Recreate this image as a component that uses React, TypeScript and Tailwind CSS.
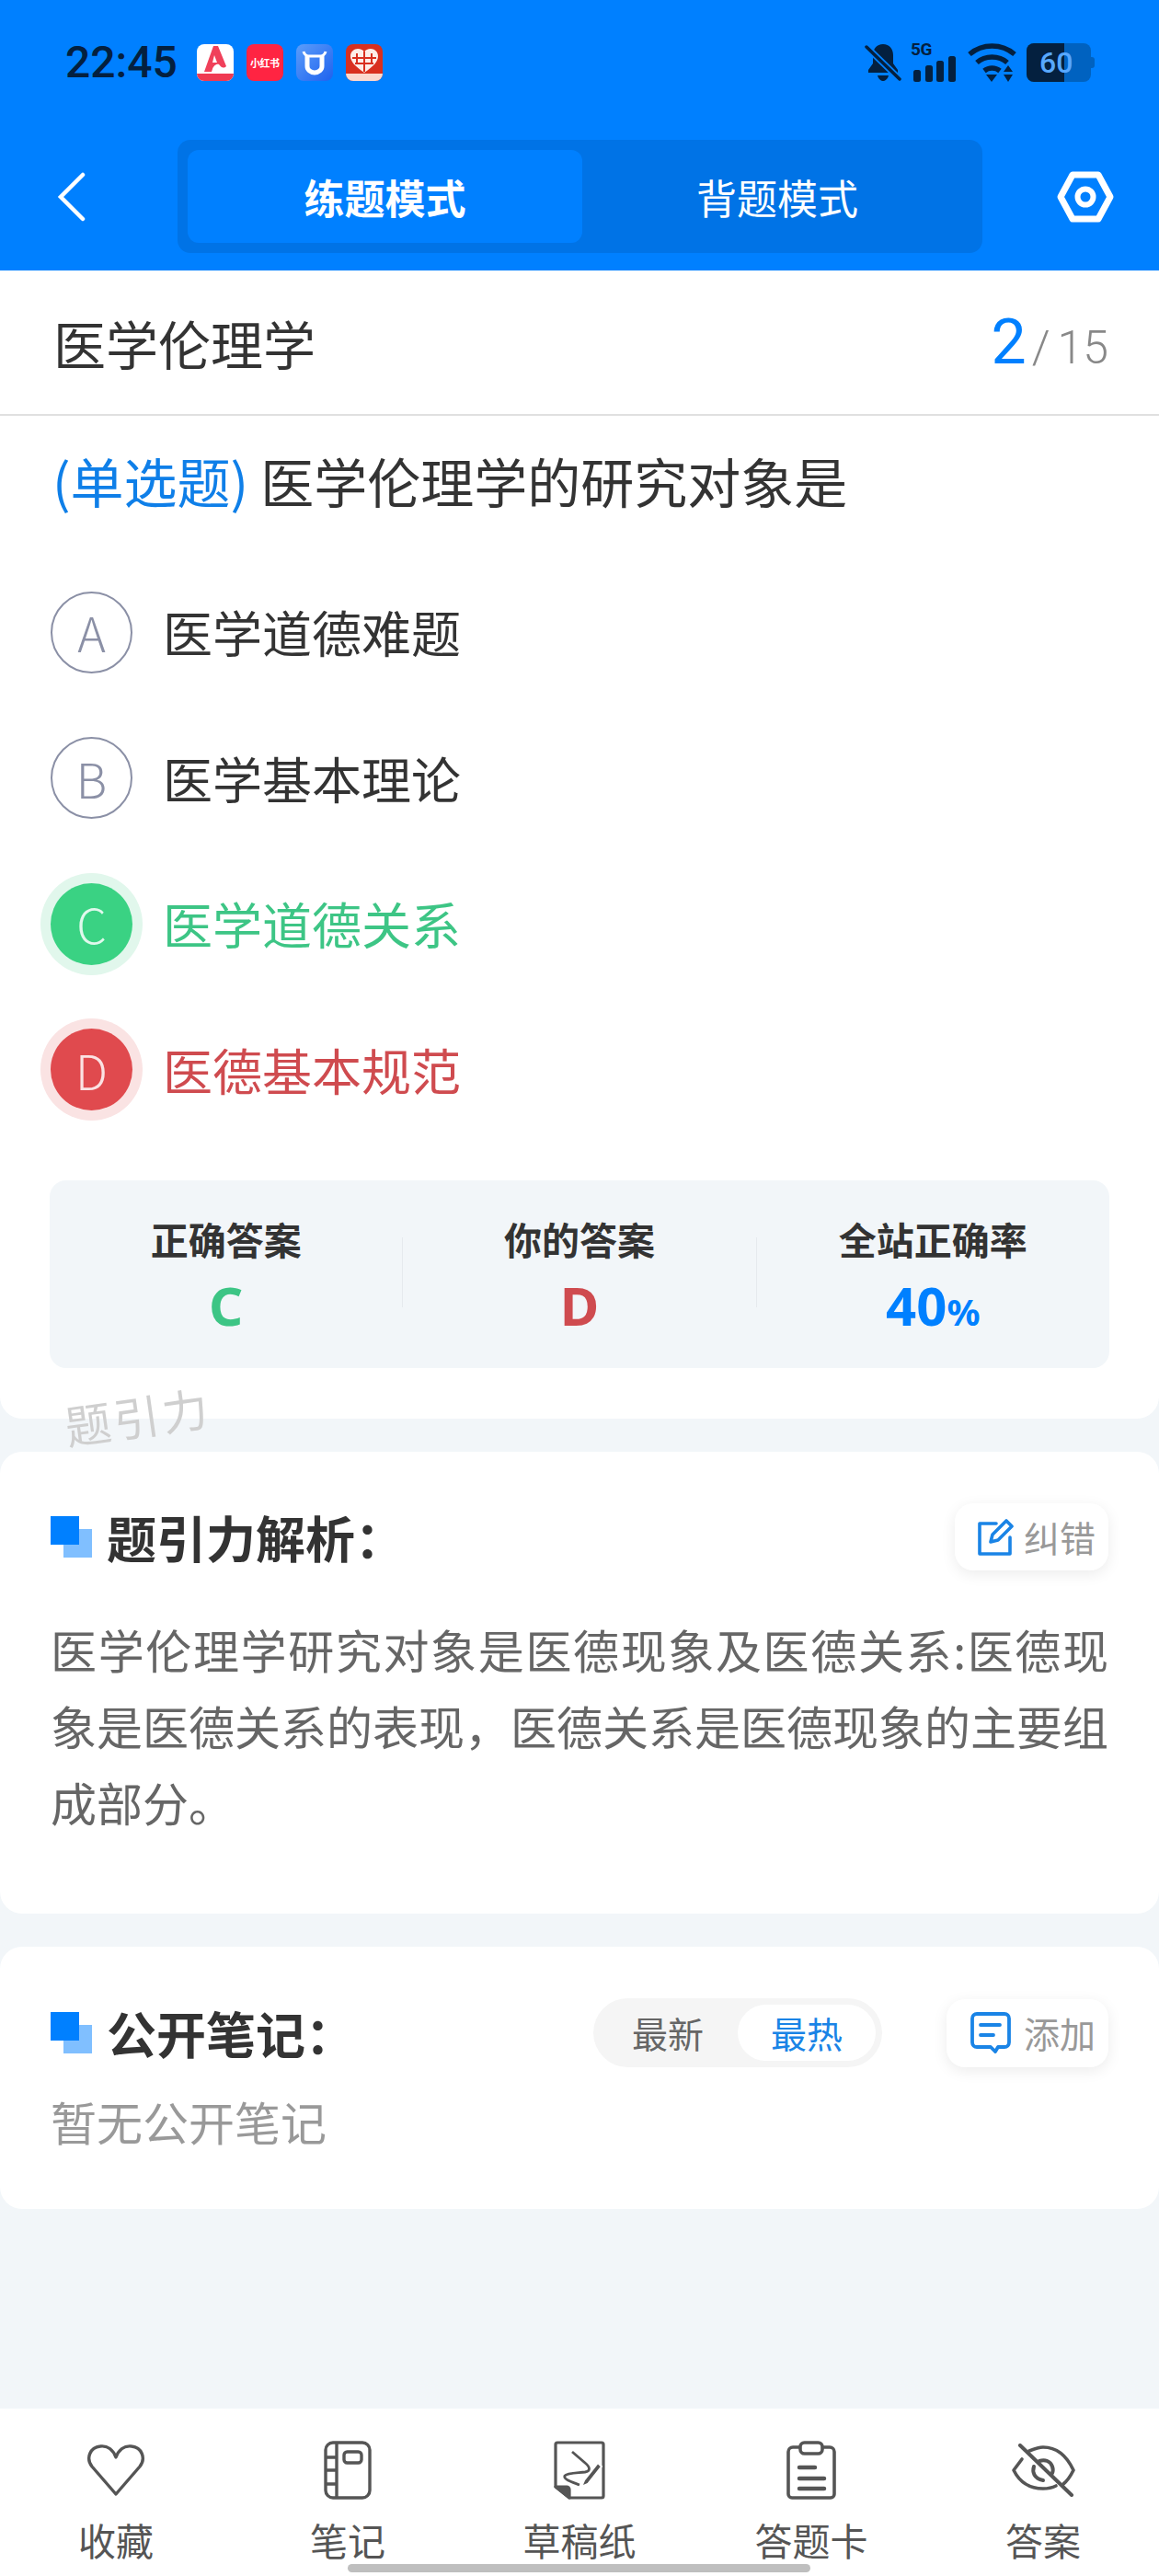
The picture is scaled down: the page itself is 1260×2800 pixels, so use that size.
import React from "react";

const Cjk = "font-['Noto_Sans_CJK_SC','Noto_Sans',sans-serif]";

function Squares() {
  return (
    <div className="relative w-[45px] h-[45px] shrink-0">
      <div className="absolute left-[14px] top-[14px] w-[31px] h-[31px] bg-[#80bfff]" />
      <div className="absolute left-0 top-0 w-[31px] h-[31px] bg-[#0080ff]" />
    </div>
  );
}

function AppIcons() {
  return (
    <div className="flex gap-[14px] ml-[21px]">
      <svg width="40" height="40" viewBox="0 0 40 40">
        <rect width="40" height="40" rx="8" fill="#fff" />
        <path d="M0 32h40v0a8 8 0 0 1-8 8H8a8 8 0 0 1-8-8z" fill="#f03a52" />
        <path d="M18 2h5l9 22c-3 3-6 1-8-2-3-1-6 2-7 5l-1 3H8z" fill="#f0405a" />
        <path d="M19 12l3 8h-5z" fill="#fff" />
      </svg>
      <div className="w-[40px] h-[40px] rounded-[8px] bg-[#ff2442] flex items-center justify-center text-white text-[11px] font-bold leading-none tracking-[-0.5px]">小红书</div>
      <svg width="40" height="40" viewBox="0 0 40 40">
        <defs>
          <linearGradient id="g1" x1="0" y1="0" x2="1" y2="1">
            <stop offset="0" stopColor="#5b9dfa" />
            <stop offset="1" stopColor="#1f62ee" />
          </linearGradient>
        </defs>
        <rect width="40" height="40" rx="8" fill="url(#g1)" />
        <path d="M12 12v12a8 7 0 0 0 16 0V12" fill="none" stroke="#fff" strokeWidth="5" />
        <path d="M8 8c1 4 3 5 7 5h10c4 0 6-1 7-5" fill="none" stroke="#fff" strokeWidth="3" />
      </svg>
      <svg width="40" height="40" viewBox="0 0 40 40">
        <rect width="40" height="40" rx="8" fill="#d9301f" />
        <path d="M0 32h40a8 8 0 0 1-8 8H8a8 8 0 0 1-8-8z" fill="#fbd9cf" />
        <path d="M20 31C10 24 5 19 5 13c0-5 4-8 8-8 3 0 6 1 7 4 1-3 4-4 7-4 4 0 8 3 8 8 0 6-5 11-15 18z" fill="#fdeee8" />
        <path d="M20 8v22M12 10v12M28 10v12M7 15h26M10 21h20" stroke="#d9301f" strokeWidth="2" />
      </svg>
    </div>
  );
}

function StatusRight() {
  const c = "#04203f";
  return (
    <div className="flex items-center mr-[70px] h-[42px]">
      <svg width="40" height="42" viewBox="0 0 40 42" className="mr-[10px]">
        <path d="M20 1c-7 0-11 5-11 12v9l-5 7v3h32v-3l-5-7v-9c0-7-4-12-11-12z" fill={c} />
        <path d="M14 35c1 4 4 6 6 6s5-2 6-6z" fill={c} />
        <path d="M2 4l36 35" stroke="#0080ff" strokeWidth="7" />
        <path d="M2 4l36 35" stroke={c} strokeWidth="3.5" strokeLinecap="round" />
      </svg>
      <div className="relative w-[50px] h-[42px] mr-[12px]">
        <span className="absolute left-0 top-[-3px] text-[19px] leading-[20px] font-bold text-[#04203f] font-['Roboto',sans-serif] tracking-[-0.5px]">5G</span>
        <svg width="50" height="42" viewBox="0 0 50 42" className="absolute left-0 top-0">
          <rect x="3" y="29" width="8" height="13" rx="2.5" fill={c} />
          <rect x="16" y="24" width="8" height="18" rx="2.5" fill={c} />
          <rect x="28" y="19" width="8" height="23" rx="2.5" fill={c} />
          <rect x="41" y="14" width="8" height="28" rx="2.5" fill={c} />
        </svg>
      </div>
      <svg width="53" height="42" viewBox="0 0 53 42" className="mr-[11px]">
        <path d="M2 12c14-12 35-12 49 0" fill="none" stroke={c} strokeWidth="5.5" />
        <path d="M10 21c9-8 24-8 33 0" fill="none" stroke={c} strokeWidth="5.5" />
        <path d="M18 30c5-4 12-4 17 0" fill="none" stroke={c} strokeWidth="5.5" />
        <path d="M20 34h12l-6 8z" fill={c} />
        <path d="M44 24l5 7H39zM44 42l5-8H39z" fill={c} />
      </svg>
      <div className="relative w-[74px] h-[42px]">
        <div className="absolute left-0 top-0 w-[70px] h-[42px] rounded-[8px] bg-[#0062c0]" />
        <div className="absolute right-0 top-[15px] w-[4px] h-[12px] rounded-r-[3px] bg-[#0062c0]" />
        <div className="absolute left-0 top-0 w-[41px] h-[42px] rounded-l-[8px] bg-[#04203f]" />
        <div className="absolute left-[14px] top-0 h-[42px] leading-[42px] text-[32px] font-medium text-[#58a8ff] font-['Roboto',sans-serif]">60</div>
      </div>
    </div>
  );
}

function Heart() {
  return (
    <svg width="64" height="56" viewBox="0 0 64 56" fill="none" stroke="#555" strokeWidth="3.4" strokeLinejoin="round">
      <path d="M32 54L6 24C-1 15 4 3 15 2c8-1 14 4 17 12C35 6 41 1 49 2c11 1 16 13 9 22z" />
    </svg>
  );
}
function Notebook() {
  return (
    <svg width="52" height="64" viewBox="0 0 52 64" fill="none" stroke="#555" strokeWidth="3.4">
      <rect x="2" y="2" width="48" height="60" rx="8" />
      <path d="M14 2v60M2 18h12M2 32h12M2 47h12" />
      <rect x="22" y="12" width="19" height="12" rx="3.5" />
    </svg>
  );
}
function Draft() {
  return (
    <svg width="56" height="64" viewBox="0 0 56 64" fill="none" stroke="#555" strokeWidth="3.2" strokeLinejoin="round">
      <path d="M4 2h48a2 2 0 0 1 2 2v56a2 2 0 0 1-2 2H17L2 50V4a2 2 0 0 1 2-2z" />
      <path d="M2 50h12a3 3 0 0 1 3 3v9z" fill="#555" />
      <path d="M20 12l14 12c6 5 6 9 0 10-9 1-20 1-22 4-2 4 8 7 16 10" strokeWidth="2.8" />
      <path d="M48 24L33 43l-3 7 7-3 15-19z" fill="#555" stroke="#fff" strokeWidth="2" />
    </svg>
  );
}
function Clipboard() {
  return (
    <svg width="56" height="64" viewBox="0 0 56 64" fill="none" stroke="#555" strokeWidth="3.6" strokeLinecap="round">
      <path d="M15 7H8a5 5 0 0 0-5 5v46a4 4 0 0 0 4 4h42a4 4 0 0 0 4-4V12a5 5 0 0 0-5-5h-7" />
      <rect x="16" y="2" width="24" height="12" rx="4.5" />
      <path d="M15 29h17M15 41h27M15 52h27" strokeWidth="4.5" />
    </svg>
  );
}
function EyeOff() {
  return (
    <svg width="70" height="58" viewBox="0 0 70 58" fill="none" stroke="#555" strokeWidth="3.6" strokeLinecap="round" strokeLinejoin="round">
      <path d="M12 17L3 29c7 14 18 20 32 20 5 0 10-1 14-3" />
      <path d="M20 8c5-2 10-4 15-4 14 0 25 8 33 25-3 6-6 11-11 15" />
      <path d="M31 19c6-2 12 0 14 6 1 3 1 5 0 7" strokeWidth="4" />
      <path d="M25 25c-2 6 0 13 10 15" strokeWidth="4" />
      <path d="M10 2l56 54" strokeWidth="4" />
    </svg>
  );
}

function Option({ letter, text, state }: { letter: string; text: string; state?: "ok" | "bad" }) {
  const textColor = state === "ok" ? "text-[#3dc585]" : state === "bad" ? "text-[#cf4b4f]" : "text-[#333333]";
  let circle = "w-[89px] h-[89px] rounded-full flex items-center justify-center text-[52px] font-light leading-none border-2 border-[#8b90a6] text-[#8b90a6]";
  if (state === "ok") circle = "w-[89px] h-[89px] rounded-full flex items-center justify-center text-[52px] font-light leading-none bg-[#3ad283] text-[#e0f8ec] ring-[11px] ring-[#e1f7ec]";
  if (state === "bad") circle = "w-[89px] h-[89px] rounded-full flex items-center justify-center text-[52px] font-light leading-none bg-[#e04a4e] text-[#fbe2e3] ring-[11px] ring-[#fae3e3]";
  return (
    <div className="h-[158.5px] flex items-center pl-[55px]">
      <div className={circle}>{letter}</div>
      <div className={`ml-[33px] text-[54px] leading-[70px] ${textColor}`}>{text}</div>
    </div>
  );
}

function Stat({ label, value, color, suffix }: { label: string; value: string; color: string; suffix?: string }) {
  return (
    <div className="flex-1 flex flex-col items-center">
      <div className="text-[41px] leading-[50px] font-bold text-[#333333] mt-[38px]">{label}</div>
      <div className={`text-[58px] leading-[60px] font-bold mt-[18px] font-['Noto_Sans',sans-serif] ${color}`}>
        {value}
        {suffix ? <span className="text-[40px]">{suffix}</span> : null}
      </div>
    </div>
  );
}

function NavItem({ label, children }: { label: string; children: React.ReactNode }) {
  return (
    <div className="flex-1 flex flex-col items-center">
      <div className="h-[66px] flex items-center justify-center">{children}</div>
      <div className="text-[41px] leading-[50px] text-[#555555] mt-[17px]">{label}</div>
    </div>
  );
}

export default function App() {
  return (
    <div className={`relative w-[1260px] h-[2800px] overflow-hidden bg-[#f2f6f9] flex flex-col ${Cjk}`}>
      <header className="h-[294px] shrink-0 bg-[#0080ff] flex flex-col">
        <div className="h-[152px] pt-[47px] flex justify-between items-start">
          <div className="flex items-center pl-[71px] h-[42px]">
            <span className="text-[48px] font-medium leading-none text-[#04203f] font-['Roboto',sans-serif]">22:45</span>
            <AppIcons />
          </div>
          <StatusRight />
        </div>
        <div className="flex items-start">
          <div className="w-[193px] h-[123px] pl-[62px] flex items-center">
            <svg width="32" height="54" viewBox="0 0 32 54" fill="none" stroke="#fff" strokeWidth="4.5" strokeLinecap="round">
              <path d="M28 3L4 27l24 24" />
            </svg>
          </div>
          <div className="w-[875px] h-[123px] rounded-[14px] bg-[#0073e6] p-[11px] flex">
            <div className="w-[429px] h-[101px] rounded-[12px] bg-[#0080ff] flex items-center justify-center text-white text-[44px] font-bold">练题模式</div>
            <div className="flex-1 flex items-center justify-center text-white text-[44px]">背题模式</div>
          </div>
          <div className="flex-1 h-[123px] flex items-center pl-[81px]">
            <svg width="62" height="56" viewBox="0 0 62 56" fill="none" stroke="#fff" strokeWidth="7" strokeLinejoin="round">
              <path d="M17 4h28l13 24-13 24H17L4 28z" />
              <circle cx="31" cy="28" r="8.5" strokeWidth="6" />
            </svg>
          </div>
        </div>
      </header>

      <section className="bg-white rounded-b-[24px] shrink-0">
        <div className="h-[158px] flex items-center justify-between pl-[58px] pr-[55px] border-b-2 border-[#e0e0e0]">
          <div className="text-[57px] leading-[70px] text-[#333333]">医学伦理学</div>
          <div className="flex items-baseline font-['Roboto',sans-serif]">
            <span className="text-[68px] text-[#0080ff] leading-none">2</span>
            <span className="text-[50px] text-[#888888] leading-none ml-[6px] font-light">/</span>
            <span className="text-[50px] text-[#888888] leading-none ml-[8px] font-light">15</span>
          </div>
        </div>
        <div className="h-[156px] pt-[35px] pl-[57px] text-[58px] leading-[70px] text-[#333333]">
          <span className="text-[#0f7fe8]">(单选题)</span> 医学伦理学的研究对象是
        </div>
        <Option letter="A" text="医学道德难题" />
        <Option letter="B" text="医学基本理论" />
        <Option letter="C" text="医学道德关系" state="ok" />
        <Option letter="D" text="医德基本规范" state="bad" />
        <div className="mt-[41px] mx-[54px] h-[204px] rounded-[18px] bg-[#f2f6f9] flex relative mb-[55px]">
          <Stat label="正确答案" value="C" color="text-[#3dc585]" />
          <div className="w-px h-[76px] mt-[62px] bg-[#e6eaee]" />
          <Stat label="你的答案" value="D" color="text-[#cf4b4f]" />
          <div className="w-px h-[76px] mt-[62px] bg-[#e6eaee]" />
          <Stat label="全站正确率" value="40" suffix="%" color="text-[#0080ff]" />
        </div>
      </section>

      <section className="mt-[36px] bg-white rounded-[24px] shrink-0 pt-[56px] pb-[80px] pl-[55px] pr-[55px]">
        <div className="flex items-center justify-between h-[73px]">
          <div className="flex items-center">
            <Squares />
            <div className="ml-[16px] text-[54px] font-bold leading-[70px] text-[#333333]">题引力解析：</div>
          </div>
          <div className="w-[167px] h-[73px] rounded-[20px] bg-white shadow-[0_4px_16px_rgba(0,0,0,0.08)] flex items-center pl-[25px]">
            <svg width="40" height="40" viewBox="0 0 40 40" fill="none" stroke="#1a84e6" strokeWidth="3.6" strokeLinejoin="round" strokeLinecap="round">
              <path d="M20 5H2v33h33V20" />
              <path d="M31 2l6 6-15 15-8 2 2-8z" />
            </svg>
            <span className="ml-[10px] text-[39px] leading-none text-[#999999]">纠错</span>
          </div>
        </div>
        <p className="mt-[44px] text-[50px] leading-[83px] text-[#666666] text-justify">
          医学伦理学研究对象是医德现象及医德关系:医德现象是医德关系的表现，医德关系是医德现象的主要组成部分。
        </p>
      </section>

      <section className="mt-[36px] bg-white rounded-[24px] shrink-0 pt-[56px] pb-[54px] pl-[55px] pr-[55px]">
        <div className="flex items-center h-[75px]">
          <Squares />
          <div className="ml-[16px] text-[54px] font-bold leading-[70px] text-[#333333]">公开笔记：</div>
          <div className="ml-auto w-[314px] h-[75px] rounded-full bg-[#f5f5f5] pl-[42px] pr-[7px] py-[7px] flex items-center justify-between">
            <span className="text-[39px] text-[#666666] leading-none">最新</span>
            <span className="w-[150px] h-[61px] rounded-full bg-white flex items-center justify-center text-[39px] text-[#1a84e6] leading-none">最热</span>
          </div>
          <div className="ml-[70px] w-[176px] h-[74px] rounded-[20px] bg-white shadow-[0_4px_16px_rgba(0,0,0,0.08)] flex items-center pl-[26px]">
            <svg width="44" height="48" viewBox="0 0 44 48" fill="none" stroke="#1a84e6" strokeWidth="3.8" strokeLinecap="round" strokeLinejoin="round">
              <path d="M7 3h30a5 5 0 0 1 5 5v26a5 5 0 0 1-5 5h-7l-3 5-5-5H7a5 5 0 0 1-5-5V8a5 5 0 0 1 5-5z" />
              <path d="M11 15h21M11 26h14" />
            </svg>
            <span className="ml-[14px] text-[39px] leading-none text-[#999999]">添加</span>
          </div>
        </div>
        <div className="mt-[17px] text-[50px] leading-[83px] text-[#999999]">暂无公开笔记</div>
      </section>

      <nav className="mt-auto h-[182px] bg-white shrink-0 flex pt-[34px]">
        <NavItem label="收藏"><Heart /></NavItem>
        <NavItem label="笔记"><Notebook /></NavItem>
        <NavItem label="草稿纸"><Draft /></NavItem>
        <NavItem label="答题卡"><Clipboard /></NavItem>
        <NavItem label="答案"><EyeOff /></NavItem>
      </nav>

      <div className="absolute left-[70px] top-[1508px] -rotate-[8deg] text-[50px] leading-[60px] text-[#cfcfcf] tracking-[3px]">题引力</div>
      <div className="absolute left-[378px] top-[2787px] w-[503px] h-[9px] rounded-full bg-[#bfbfbf]" />
    </div>
  );
}
